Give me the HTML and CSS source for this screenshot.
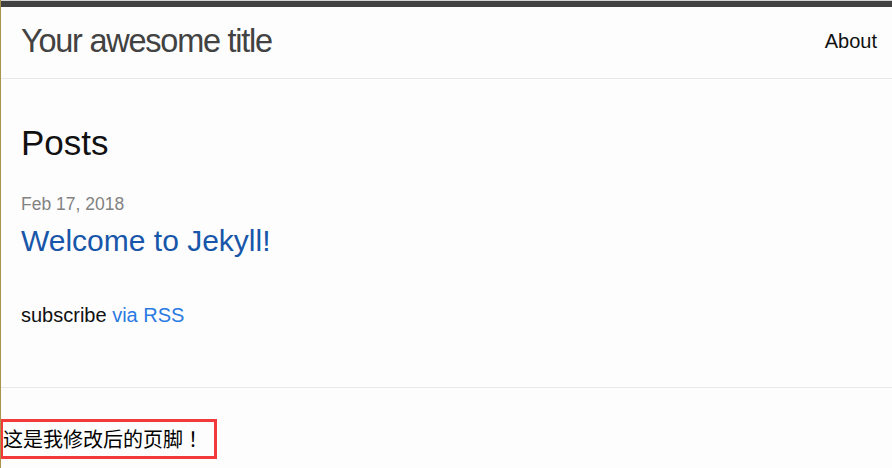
FILE: index.html
```html
<!DOCTYPE html>
<html lang="en">
<head>
<meta charset="utf-8">
<title>Your awesome title</title>
<link rel="stylesheet" href="styles.css">
</head>
<body>
<div class="topline"></div>
<header class="site-header">
  <a class="site-title" href="#">Your awesome title</a>
  <nav class="site-nav"><a class="page-link" href="#">About</a></nav>
</header>
<main class="page-content">
  <h2 class="post-list-heading">Posts</h2>
  <ul class="post-list">
    <li>
      <span class="post-meta">Feb 17, 2018</span>
      <h3 class="post-title"><a class="post-link" href="#">Welcome to Jekyll!</a></h3>
    </li>
  </ul>
  <p class="rss-subscribe">subscribe <a href="#">via RSS</a></p>
</main>
<footer class="site-footer">
  <div class="footer-note">这是我修改后的页脚<span class="fw">！</span></div>
</footer>
</body>
</html>
```

FILE: styles.css
```css
html, body {
  margin: 0;
  padding: 0;
  background: #fdfdfd;
}
body {
  border-left: 1px solid #a8954a;
  min-height: 468px;
  box-sizing: border-box;
  font-family: "Liberation Sans", Arial, sans-serif;
  font-size: 20px;
  line-height: 1.5;
  color: #111;
}
a { text-decoration: none; }
.topline {
  height: 1px;
  background: #d4d4d4;
}
.site-header {
  height: 70px;
  border-top: 6px solid #424242;
  border-bottom: 1px solid #e8e8e8;
  display: flex;
  justify-content: space-between;
  align-items: flex-start;
  padding: 1px 15px 0 20px;
}
.site-title {
  font-size: 32.5px;
  line-height: 67.5px;
  letter-spacing: -1.25px;
  color: #424242;
}
.page-link {
  font-size: 20px;
  line-height: 67.5px;
  color: #111;
}
.page-content {
  padding: 37.5px 20px;
}
.post-list-heading {
  margin: 0 0 18.75px;
  font-size: 35px;
  font-weight: 400;
  line-height: 1.5;
}
.post-list {
  list-style: none;
  margin: 0 0 18.75px;
  padding: 0 0 18.75px;
}
.post-meta {
  font-size: 17.5px;
  color: #828282;
}
.post-title {
  margin: 0;
  font-size: 30px;
  font-weight: 400;
  line-height: 1.5;
}
.post-link { color: #1756a9; }
.rss-subscribe { margin: 0 0 18.75px; }
.rss-subscribe a { color: #2a7ae2; }
.site-footer {
  border-top: 1px solid #e8e8e8;
  padding-top: 31px;
}
.footer-note {
  display: inline-block;
  margin-left: -1px;
  border: 3px solid #f23a3a;
  padding: 0 11px 0 0;
  font-family: "Noto Sans CJK SC", sans-serif;
  font-size: 20px;
  line-height: 34px;
  color: #000;
}
.fw {
  font-family: "Noto Sans CJK TC", sans-serif;
}
```
